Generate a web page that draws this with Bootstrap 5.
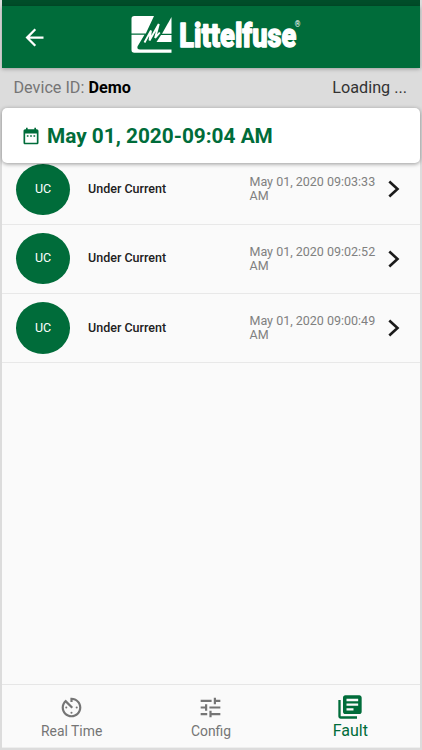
<!DOCTYPE html>
<html lang="en">
<head>
<meta charset="utf-8">
<meta name="viewport" content="width=device-width, initial-scale=1">
<title>Littelfuse - Fault log</title>
<link href="https://cdn.jsdelivr.net/npm/bootstrap@5.3.0/dist/css/bootstrap.min.css" rel="stylesheet">
<style>
:root { --brand: #006c3a; }
body { font-family: Roboto, sans-serif; background: #dcdcdc; color: #212121; }
.app { width: 418px; height: 748px; margin-left: 2px; background: #fafafa; }
.statusbar { height: 6px; background: #004d29; }
.topbar { height: 62px; background: var(--brand); box-shadow: 0 1px 4px rgba(0,0,0,.3); z-index: 1; padding-left: 19px; }
.back { width: 27px; height: 27px; }
.brand-logo { width: 172px; height: 44px; margin-left: 83px; }
.device { height: 40px; background: #dcdcdc; font-size: 16.2px; padding: 1px 13px 0 11.500px; color: #333; }
.device .lbl { color: #757575; }
.device b { color: #000; font-weight: 700; }
.date-wrap { background: linear-gradient(#dcdcdc 50%, #fafafa 50%); height: 55px; }
.date-card { height: 55px; border-radius: 5px; background: #fff; color: var(--brand); font-size: 20.8px; font-weight: 700; padding-left: 19px; box-shadow: 0 1px 4px rgba(0,0,0,.4); z-index: 1; }
.date-card svg { width: 20px; height: 20px; margin-right: 6px; }
.date-card span { padding-top: 2px; }
.fault { height: 69.3px; border-bottom: 1px solid #e8e8e8; padding-left: 14px; }
.fault:first-child { height: 61.600px; padding-bottom: 8px; }
.avatar { width: 54px; height: 51.5px; background: var(--brand); color: #fff; font-size: 12.5px; }
.fault-name { width: 161.500px; margin-left: 18px; font-size: 12.5px; font-weight: 500; }
.fault-time { width: 135px; font-size: 12.5px; line-height: 14px; color: #808080; }
.chev { width: 12px; height: 18px; margin-left: 3px; }
.tabs { height: 64px; border-top: 1px solid #e6e6e6; border-bottom: 1px solid #eee; font-size: 13.2px; color: #757575; }
.tab-item { width: 139.33px; padding-top: 10px; line-height: 16px; text-decoration: none; color: inherit; }
.tab-item span { font-size: 13.9px; }
.tab-item svg { width: 25px; height: 25px; margin-bottom: 3px; }
.tab-item.current { color: var(--brand); padding-top: 8px; }
.tab-item.current span { font-size: 16px; }
.tab-item.current svg { width: 28px; height: 28px; margin-bottom: 2px; }
</style>
</head>
<body class="overflow-hidden">
<div class="app d-flex flex-column">
  <div class="statusbar flex-shrink-0"></div>
  <header class="topbar d-flex align-items-center flex-shrink-0 position-relative">
    <svg class="back" viewBox="0 0 24 24" fill="#fff"><path d="M20 11H7.83l5.59-5.59L12 4l-8 8 8 8 1.41-1.41L7.83 13H20v-2z"/></svg>
    <svg class="brand-logo overflow-visible" viewBox="131 15 172 44" role="img" aria-label="Littelfuse">
      <g fill="#fff">
        <path d="M134.300 16H154L145.800 33.5H131.5V18.7Q131.5 16 134.300 16Z"/>
        <path d="M131.5 34.8H144.500L137.6 46.3Q136.6 49.4 140 49.600H171.5V52.8H134.300Q131.5 52.8 131.5 50Z"/>
        <path d="M171.5 17V33.7H162Z"/>
        <path d="M161 35.1H171.5V42H156.5Z"/>
        <path d="M144.500 42.5L151 30.500L149.500 40.500L158.8 24L155.100 38L159.800 32.500" fill="none" stroke="#fff" stroke-width="1.9"/>
      </g>
      <text x="179.3" y="47.3" textLength="121" lengthAdjust="spacingAndGlyphs" font-family="Roboto" font-weight="900" font-size="34" fill="#fff" stroke="#fff" stroke-width="1.3" stroke-linejoin="round">Littelfuse<tspan dx="-2" dy="-20.300" font-size="9" font-weight="500" stroke="none">®</tspan></text>
    </svg>
  </header>
  <div class="device d-flex justify-content-between align-items-center flex-shrink-0">
    <div><span class="lbl">Device ID:</span> <b>Demo</b></div>
    <div>Loading ...</div>
  </div>
  <div class="date-wrap flex-shrink-0">
    <div class="date-card d-flex align-items-center position-relative">
      <svg viewBox="0 0 24 24" fill="currentColor"><path d="M9 11H7v2h2v-2zm4 0h-2v2h2v-2zm4 0h-2v2h2v-2zm2-7h-1V2h-2v2H8V2H6v2H5c-1.11 0-1.99.9-1.99 2L3 20c0 1.1.89 2 2 2h14c1.1 0 2-.9 2-2V6c0-1.100-.9-2-2-2zm0 16H5V9h14v11z"/></svg>
      <span>May 01, 2020-09:04 AM</span>
    </div>
  </div>
  <main class="flex-grow-1">
    <div class="fault d-flex align-items-center">
      <div class="avatar rounded-circle d-flex align-items-center justify-content-center">UC</div>
      <div class="fault-name">Under Current</div>
      <div class="fault-time">May 01, 2020 09:03:33 AM</div>
      <svg class="chev" viewBox="0 0 12 18" fill="none" stroke="#1a1a1a" stroke-width="2.6"><path d="M1.300 1.500L9.500 9L1.300 16.500"/></svg>
    </div>
    <div class="fault d-flex align-items-center">
      <div class="avatar rounded-circle d-flex align-items-center justify-content-center">UC</div>
      <div class="fault-name">Under Current</div>
      <div class="fault-time">May 01, 2020 09:02:52 AM</div>
      <svg class="chev" viewBox="0 0 12 18" fill="none" stroke="#1a1a1a" stroke-width="2.6"><path d="M1.300 1.500L9.500 9L1.300 16.500"/></svg>
    </div>
    <div class="fault d-flex align-items-center">
      <div class="avatar rounded-circle d-flex align-items-center justify-content-center">UC</div>
      <div class="fault-name">Under Current</div>
      <div class="fault-time">May 01, 2020 09:00:49 AM</div>
      <svg class="chev" viewBox="0 0 12 18" fill="none" stroke="#1a1a1a" stroke-width="2.6"><path d="M1.300 1.500L9.500 9L1.300 16.500"/></svg>
    </div>
  </main>
  <nav class="tabs d-flex flex-shrink-0">
    <a class="tab-item d-flex flex-column align-items-center" href="#">
      <svg viewBox="0 0 24 24" fill="currentColor"><circle cx="12" cy="17" r="1"/><circle cx="17" cy="12" r="1"/><circle cx="7" cy="12" r="1"/><path d="M11 3v4h2V5.080c3.390.49 6 3.390 6 6.920 0 3.870-3.130 7-7 7s-7-3.130-7-7c0-1.680.59-3.220 1.580-4.420L12 13l1.410-1.410-6.800-6.800v.02C4.420 6.450 3 9.050 3 12c0 4.970 4.020 9 9 9 4.970 0 9-4.030 9-9s-4.030-9-9-9h-1z" transform="translate(-.6 -.6) scale(1.05)"/></svg>
      <span>Real Time</span>
    </a>
    <a class="tab-item d-flex flex-column align-items-center" href="#">
      <svg viewBox="0 0 24 24" fill="currentColor"><path transform="translate(-.6 -.6) scale(1.05)" d="M3 17v2h6v-2H3zM3 5v2h10V5H3zm10 16v-2h8v-2h-8v-2h-2v6h2zM7 9v2H3v2h4v2h2V9H7zm14 4v-2H11v2h10zm-6-4h2V7h4V5h-4V3h-2v6z"/></svg>
      <span>Config</span>
    </a>
    <a class="tab-item current d-flex flex-column align-items-center" href="#" aria-current="page">
      <svg viewBox="0 0 24 24" fill="currentColor"><path d="M4 6H2v14c0 1.100.9 2 2 2h14v-2H4V6zm16-4H8c-1.100 0-2 .9-2 2v12c0 1.100.9 2 2 2h12c1.100 0 2-.9 2-2V4c0-1.100-.9-2-2-2zm-1 9H9V9h10v2zm-4 4H9v-2h6v2zm4-8H9V5h10v2z"/></svg>
      <span>Fault</span>
    </a>
  </nav>
</div>
<script src="https://cdn.jsdelivr.net/npm/bootstrap@5.3.0/dist/js/bootstrap.bundle.min.js"></script>
</body>
</html>
